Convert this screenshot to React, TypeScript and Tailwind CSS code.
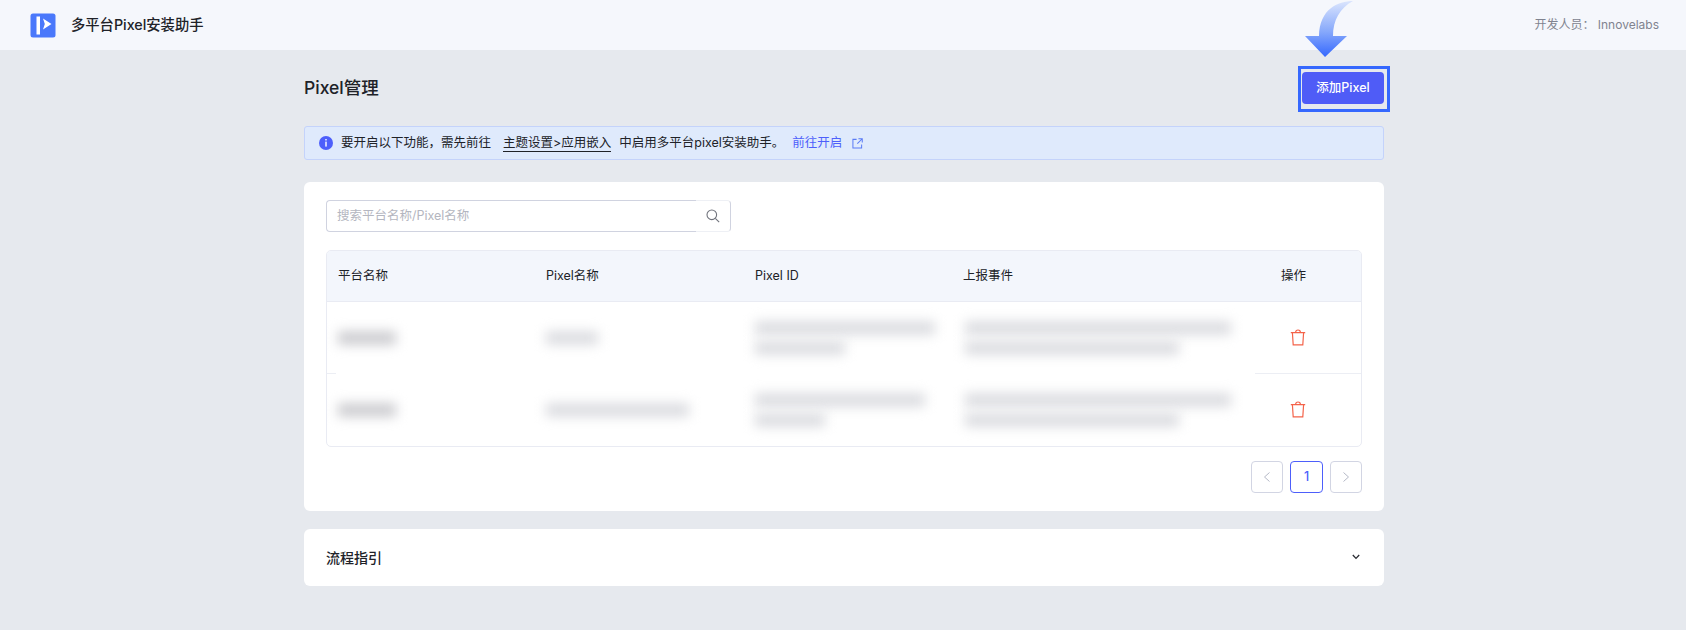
const FONT = { fontFamily: 'Inter, "Noto Sans CJK SC", sans-serif' };

function Logo() {
  return (
    <svg width="26" height="25" viewBox="0 0 26 25">
      <rect x="0.5" y="0.5" width="25" height="24" rx="2.5" fill="#4a78fb" />
      <rect x="6.5" y="3.5" width="3.5" height="18" fill="#fff" />
      <path d="M13 5.5 L21.5 11 L13 16.5 L14.8 11 Z" fill="#fff" />
    </svg>
  );
}

function Arrow() {
  return (
    <svg className="absolute left-[1300px] top-0" width="60" height="60" viewBox="0 0 60 60">
      <defs>
        <linearGradient id="arrowFill" x1="0" y1="0" x2="0" y2="1">
          <stop offset="0" stopColor="#dbe5fd" />
          <stop offset="0.55" stopColor="#86a8fb" />
          <stop offset="1" stopColor="#3568fe" />
        </linearGradient>
      </defs>
      <path
        d="M53 1 C38 1 19.5 9 19 36 L5 36 L25 57 L47 36 L33 36 C33 20 40 8 53 1 Z"
        fill="url(#arrowFill)"
      />
    </svg>
  );
}

function Trash() {
  return (
    <svg width="16" height="17" viewBox="0 0 16 17" fill="none" stroke="#f4634a" strokeWidth="1.2">
      <path d="M0.8 3.6 H15.2" />
      <path d="M5.6 3.6 C5.6 1.9 6.6 1 8 1 C9.4 1 10.4 1.9 10.4 3.6" />
      <path d="M2.4 3.6 L3.2 15.8 H12.8 L13.6 3.6" />
    </svg>
  );
}

function Blur({ w, strong }: { w: number; strong?: boolean }) {
  return (
    <div
      className={`h-[14px] blur-[6px] ${strong ? 'bg-[#cdcdd1]' : 'bg-[#dcdde1]'}`}
      style={{ width: w }}
    />
  );
}

const rows = [
  { name: 58, pixel: 52, id: [180, 90], ev: [266, 214] },
  { name: 58, pixel: 143, id: [170, 70], ev: [266, 214] },
];

export default function App() {
  return (
    <div className="relative h-[630px] overflow-hidden bg-[#e6e9ee] text-[#202228]" style={FONT}>
      <header className="flex h-[50px] items-center justify-between bg-[#f5f7fc] pl-[30px] pr-[27px]">
        <div className="flex items-center gap-[15px]">
          <Logo />
          <span className="text-[14.3px] font-medium">多平台Pixel安装助手</span>
        </div>
        <span className="text-[12px] text-[#80838f]">开发人员： Innovelabs</span>
      </header>

      <main className="ml-[304px] w-[1080px]">
        <div className="flex h-[76px] items-center justify-between">
          <h1 className="pb-[1px] text-[17.5px] font-medium leading-none">Pixel管理</h1>
          <button className="h-[32px] w-[82px] rounded-[4px] bg-[#4f5cf7] text-[12.5px] font-medium text-white">
            添加Pixel
          </button>
        </div>

        <div className="flex h-[34px] items-center rounded-[3px] border border-[#c4d3fb] bg-[#dfeafc] pl-[14px] text-[12.5px]">
          <svg width="14" height="14" viewBox="0 0 14 14">
            <circle cx="7" cy="7" r="7" fill="#4d5ffb" />
            <rect x="6.3" y="3" width="1.4" height="1.5" fill="#fff" />
            <rect x="6.3" y="5.6" width="1.4" height="5" fill="#fff" />
          </svg>
          <span className="ml-[8px]">要开启以下功能，需先前往</span>
          <span className="ml-[12px] border-b border-[#202228] leading-[17px]">主题设置&gt;应用嵌入</span>
          <span className="ml-[8px]">中启用多平台pixel安装助手。</span>
          <span className="ml-[8px] text-[#4d5ffb]">前往开启</span>
          <svg className="ml-[10px]" width="11" height="11" viewBox="0 0 12 12" fill="none" stroke="#5a7bf5" strokeWidth="1.1">
            <path d="M5 1.5 H1 V11 H10.5 V7" />
            <path d="M7 0.8 H11.2 V5 M11.2 0.8 L5.8 6.2" />
          </svg>
        </div>

        <section className="mt-[22px] h-[329px] rounded-[6px] bg-white px-[22px] pt-[18px]">
          <div className="flex h-[32px] w-[405px]">
            <div className="flex flex-1 items-center rounded-l-[4px] border-y border-l border-[#d0d3e0] pl-[10px] text-[12.5px] text-[#b4b6c0]">
              搜索平台名称/Pixel名称
            </div>
            <div className="flex w-[35px] items-center justify-end rounded-r-[4px] border border-l-0 border-y-[#eef0f5] border-r-[#d0d3e0] pr-[10px]">
              <svg width="14" height="14" viewBox="0 0 14 14" fill="none" stroke="#70737c" strokeWidth="1.1">
                <circle cx="5.8" cy="5.8" r="4.8" />
                <path d="M9.3 9.3 L13.2 13.2" />
              </svg>
            </div>
          </div>

          <div className="mt-[18px] h-[197px] overflow-hidden rounded-[5px] border border-[#e9ebf3] text-[12.5px]">
            <div className="grid h-[51px] grid-cols-[208px_209px_208px_318px_1fr] items-center border-b border-[#e9ebf3] bg-[#f3f6fc] pl-[11px]">
              <span>平台名称</span>
              <span>Pixel名称</span>
              <span>Pixel ID</span>
              <span>上报事件</span>
              <span>操作</span>
            </div>
            {rows.map((r, i) => (
              <div key={i}>
                {i > 0 && (
                  <div className="flex h-px justify-between">
                    <div className="w-[9px] bg-[#eceef4]" />
                    <div className="w-[106px] bg-[#eceef4]" />
                  </div>
                )}
                <div className="grid h-[71px] grid-cols-[208px_209px_208px_318px_1fr] items-center pl-[11px]">
                  <Blur w={r.name} strong />
                  <Blur w={r.pixel} />
                  <div className="flex flex-col gap-[6px]">
                    <Blur w={r.id[0]} />
                    <Blur w={r.id[1]} />
                  </div>
                  <div className="ml-[2px] flex flex-col gap-[6px]">
                    <Blur w={r.ev[0]} />
                    <Blur w={r.ev[1]} />
                  </div>
                  <div className="pl-[9px]">
                    <Trash />
                  </div>
                </div>
              </div>
            ))}
          </div>

          <div className="mt-[14px] flex justify-end gap-[7px]">
            <div className="flex h-[32px] w-[32px] items-center justify-center rounded-[4px] border border-[#d2d5e3]">
              <svg width="8" height="10" viewBox="0 0 8 10" fill="none" stroke="#b4b8c6" strokeWidth="1">
                <path d="M6.5 0.5 L1.5 5 L6.5 9.5" />
              </svg>
            </div>
            <div className="flex h-[32px] w-[33px] items-center justify-center rounded-[4px] border border-[#4d5ffb] text-[12.5px] font-medium text-[#4d5ffb]">
              1
            </div>
            <div className="flex h-[32px] w-[32px] items-center justify-center rounded-[4px] border border-[#d2d5e3]">
              <svg width="8" height="10" viewBox="0 0 8 10" fill="none" stroke="#b4b8c6" strokeWidth="1">
                <path d="M1.5 0.5 L6.5 5 L1.5 9.5" />
              </svg>
            </div>
          </div>
        </section>

        <section className="mt-[18px] flex h-[57px] items-center justify-between rounded-[6px] bg-white pb-[1px] pl-[22px] pr-[24px]">
          <span className="text-[14px] font-medium">流程指引</span>
          <svg width="8" height="6" viewBox="0 0 8 6" fill="none" stroke="#2a2c33" strokeWidth="1.3">
            <path d="M0.8 1 L4 4.4 L7.2 1" />
          </svg>
        </section>
      </main>

      <Arrow />
      <div className="absolute left-[1298px] top-[66px] h-[46px] w-[92px] border-[3px] border-[#3568fe]" />
    </div>
  );
}
